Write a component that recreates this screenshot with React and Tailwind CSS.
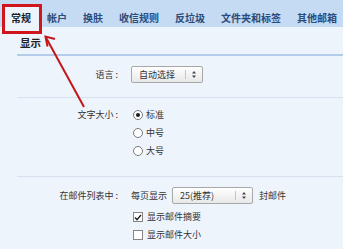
import React from 'react';

const tabs = ['常规', '帐户', '换肤', '收信规则', '反垃圾', '文件夹和标签', '其他邮箱'];

// small dropdown like the old mail settings page
const Select = ({ value, width }) => (
  <div className={`flex h-[17px] items-center rounded-[2px] border border-[#a8a8a8] bg-linear-to-b from-white to-[#e8e8e8] pl-[7px] text-[9px] text-[#333] ${width}`}>
    <span className="flex-1 leading-none">{value}</span>
    <span className="h-[9px] w-px bg-[#c4c4c4]" />
    <span className="flex w-[16px] items-center justify-center">
      <svg width="4" height="7" viewBox="0 0 4 7">
        <path d="M2 0L4 2.6H0Z M0 4.4H4L2 7Z" fill="#444" />
      </svg>
    </span>
  </div>
);

const Radio = ({ label, checked }) => (
  <div className="flex h-[18px] items-center gap-[3px] pl-[2px]">
    <span className="flex h-[10px] w-[10px] items-center justify-center rounded-full border border-[#7a7a7a] bg-white">
      {checked && <span className="h-[4px] w-[4px] rounded-full bg-[#1a1a1a]" />}
    </span>
    <span>{label}</span>
  </div>
);

const Checkbox = ({ label, checked }) => (
  <div className="flex h-[18px] items-center gap-[4px] pl-[2px]">
    <span className="flex h-[10px] w-[10px] items-center justify-center border border-[#858585] bg-white">
      {checked && (
        <svg width="8" height="7" viewBox="0 0 8 7">
          <path d="M1 3.6L3 5.6L7 1" fill="none" stroke="#222" strokeWidth="1.4" />
        </svg>
      )}
    </span>
    <span>{label}</span>
  </div>
);

const Label = ({ children }) => (
  <div className="flex h-[17px] w-[101px] shrink-0 items-center justify-end">{children}</div>
);

export default function App() {
  return (
    <div className="relative h-[249px] w-[343px] overflow-hidden bg-[#eef4fc] font-['Noto_Sans_CJK_SC',sans-serif] text-[9px] text-[#333]">
      {/* tab bar */}
      <div className="flex h-[27px] bg-[#c5daf3] pl-[3px] text-[10px] font-bold whitespace-nowrap">
        {tabs.map((t, i) =>
          i === 0 ? (
            <div key={t} className="mt-[5px] bg-[#eef4fc] px-[8px] pt-[4px] leading-[18px] text-[#1e1e1e]">
              {t}
            </div>
          ) : (
            <div key={t} className="px-[8px] pt-[9px] leading-[18px] text-[#2a4c7c]">
              {t}
            </div>
          )
        )}
      </div>

      <div className="ml-[17px]">
        {/* section title */}
        <div className="flex h-[29px] items-center border-b-2 border-[#b3cce9] pt-[5px] pl-[3px] text-[10.5px] font-bold text-[#222]">
          显示
        </div>

        {/* language */}
        <div className="flex h-[42px] gap-[13px] border-b border-[#d6e1ef] pt-[10px]">
          <Label>语言 :</Label>
          <Select value="自动选择" width="w-[72px]" />
        </div>

        {/* font size */}
        <div className="flex h-[79px] gap-[13px] border-b border-[#d6e1ef] pt-[8px]">
          <div className="flex h-[18px] w-[101px] shrink-0 items-center justify-end">文字大小 :</div>
          <div className="flex flex-col">
            <Radio label="标准" checked />
            <Radio label="中号" />
            <Radio label="大号" />
          </div>
        </div>

        {/* mail list */}
        <div className="flex gap-[13px] pt-[10px]">
          <Label>在邮件列表中 :</Label>
          <div className="flex flex-col">
            <div className="flex h-[17px] items-center">
              <span className="mr-[5px]">每页显示</span>
              <Select value="25(推荐)" width="w-[81px]" />
              <span className="ml-[6px]">封邮件</span>
            </div>
            <div className="mt-[4px] flex flex-col">
              <Checkbox label="显示邮件摘要" checked />
              <Checkbox label="显示邮件大小" />
            </div>
          </div>
        </div>
      </div>

      {/* annotation: red frame + arrow */}
      <div className="pointer-events-none absolute top-[4px] left-[2px] h-[30px] w-[40px] border-[3px] border-[#d0161c]" />
      <svg className="pointer-events-none absolute top-0 left-0" width="343" height="249">
        <line x1="84" y1="107" x2="46.5" y2="38.5" stroke="#c2161b" strokeWidth="2" />
        <path d="M55 39L45.5 36.5L47.5 46.5" fill="none" stroke="#c2161b" strokeWidth="2" />
      </svg>
    </div>
  );
}
